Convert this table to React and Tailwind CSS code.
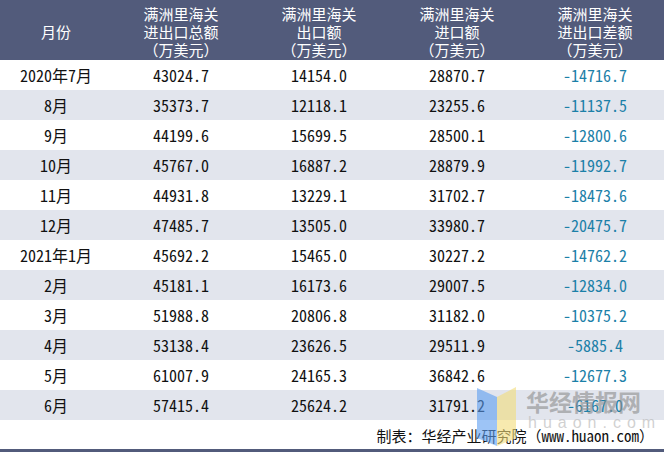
import React from "react";

const rows = [
  ["2020年7月", "43024.7", "14154.0", "28870.7", "-14716.7"],
  ["8月", "35373.7", "12118.1", "23255.6", "-11137.5"],
  ["9月", "44199.6", "15699.5", "28500.1", "-12800.6"],
  ["10月", "45767.0", "16887.2", "28879.9", "-11992.7"],
  ["11月", "44931.8", "13229.1", "31702.7", "-18473.6"],
  ["12月", "47485.7", "13505.0", "33980.7", "-20475.7"],
  ["2021年1月", "45692.2", "15465.0", "30227.2", "-14762.2"],
  ["2月", "45181.1", "16173.6", "29007.5", "-12834.0"],
  ["3月", "51988.8", "20806.8", "31182.0", "-10375.2"],
  ["4月", "53138.4", "23626.5", "29511.9", "-5885.4"],
  ["5月", "61007.9", "24165.3", "36842.6", "-12677.3"],
  ["6月", "57415.4", "25624.2", "31791.2", "-6167.0"],
];

const headers = [
  ["月份"],
  ["满洲里海关", "进出口总额", "（万美元）"],
  ["满洲里海关", "出口额", "（万美元）"],
  ["满洲里海关", "进口额", "（万美元）"],
  ["满洲里海关", "进出口差额", "（万美元）"],
];

const font = {
  fontFamily:
    '"Noto Sans Mono CJK SC", "Liberation Mono", "Noto Sans CJK SC", monospace',
};

export default function App() {
  return (
    <div
      className="relative w-[664px] h-[452px] bg-white overflow-hidden"
      style={font}
    >
      <div className="grid grid-cols-[112px_138px_138px_138px_138px] h-[60px] bg-[#525b7b] text-white text-[15px] leading-[18px]">
        {headers.map((h, i) => (
          <div key={i} className="flex flex-col items-center justify-center pt-[3px]">
            {h.map((l, j) => (
              <div key={j}>{l}</div>
            ))}
          </div>
        ))}
      </div>
      {rows.map((r, i) => (
        <div
          key={i}
          className={`grid grid-cols-[112px_138px_138px_138px_138px] h-[30px] items-center text-[16px] text-[#111] ${
            i % 2 === 1 ? "bg-[#e2e5ed]" : "bg-white"
          }`}
        >
          {r.map((c, j) => (
            <div
              key={j}
              className={`text-center ${j === 4 ? "text-[#1c80a8]" : ""}`}
            >
              {c}
            </div>
          ))}
        </div>
      ))}
      <div className="h-[29px] flex items-center justify-end pr-[10px] pt-[4px] text-[15px] text-[#111]">
        制表：华经产业研究院（www.huaon.com）
      </div>
      <div className="h-[3px] bg-[#525b7b]" />

      <div className="absolute left-[477px] top-[386px] pointer-events-none">
        <svg width="40" height="60" viewBox="0 0 40 60">
          <polygon points="0,2 20,11 20,60 0,52" fill="#5b9cf0" opacity="0.6" />
          <polygon points="20,11 39,1 39,52 20,60" fill="#f2dc7a" opacity="0.6" />
        </svg>
      </div>
      <div
        className="absolute left-[526px] top-[387px] pointer-events-none flex flex-col items-start"
        style={{ fontFamily: '"Noto Sans CJK SC", sans-serif' }}
      >
        <div className="text-[23px] leading-[28px] font-bold text-[#8c8c8c]/60 tracking-[0px]">
          华经情报网
        </div>
        <div
          className="text-[16px] leading-[16px] text-[#bdbdbd]/70 tracking-[6px] pl-[2px]"
          style={{ fontFamily: '"Liberation Sans", sans-serif' }}
        >
          huaon.com
        </div>
      </div>
    </div>
  );
}
